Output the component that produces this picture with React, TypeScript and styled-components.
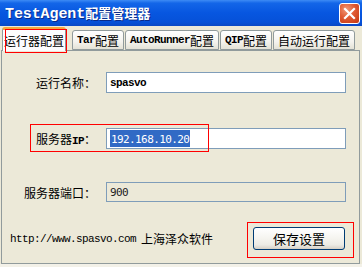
import styled, { createGlobalStyle } from 'styled-components';

const GlobalStyle = createGlobalStyle`
  html, body {
    margin: 0;
    padding: 0;
    background: #ece9d8;
  }
  body {
    font-family: "Noto Sans CJK SC", "Liberation Sans", sans-serif;
    font-size: 12px;
    color: #000;
  }
`;

const Window = styled.div`
  width: 362px;
  height: 267px;
  background: #ece9d8;
  display: flex;
  flex-direction: column;
  overflow: hidden;
`;

const TitleBar = styled.div`
  height: 26px;
  flex-shrink: 0;
  display: flex;
  align-items: center;
  justify-content: space-between;
  padding: 0 2px 0 5px;
  background: linear-gradient(
    to bottom,
    #3d8bf5 0%,
    #1366e8 12%,
    #0756e0 50%,
    #0651d8 85%,
    #0a48c4 100%
  );
`;

const Title = styled.div`
  color: #fff;
  font-weight: 700;
  font-size: 13px;
  text-shadow: 1px 1px 0 #0a2c8a;
  white-space: nowrap;
  display: flex;
  align-items: baseline;
`;

const TitleLatin = styled.span`
  font-family: "Liberation Mono", monospace;
  font-size: 15px;
  letter-spacing: -0.1px;
`;

const CloseButton = styled.div`
  width: 19px;
  height: 19px;
  border: 1px solid #fff;
  border-radius: 3px;
  background: radial-gradient(circle at 35% 30%, #f09a7a 0%, #e05a32 45%, #c3360f 100%);
  display: flex;
  align-items: center;
  justify-content: center;
`;

const TabStrip = styled.div`
  height: 24px;
  flex-shrink: 0;
  display: flex;
  align-items: flex-end;
  padding-left: 2px;
  position: relative;
  z-index: 1;
`;

const Tab = styled.div<{ $active?: boolean; $gap?: number }>`
  position: relative;
  margin-left: ${({ $gap }) => $gap ?? 1}px;
  height: ${({ $active }) => ($active ? 24 : 20)}px;
  padding: 0 ${({ $active }) => ($active ? 1 : 4)}px;
  box-sizing: border-box;
  display: flex;
  align-items: center;
  white-space: nowrap;
  border: 1px solid #919b9c;
  border-bottom: ${({ $active }) => ($active ? 'none' : '1px solid #919b9c')};
  border-radius: 3px 3px 0 0;
  background: ${({ $active }) =>
    $active ? '#fcfcfe' : 'linear-gradient(to bottom, #ffffff 0%, #f4f3ee 60%, #e4e2d6 100%)'};
  border-top: ${({ $active }) => ($active ? '3px solid #f6a93c' : '1px solid #919b9c')};
  font-size: 12px;
  margin-bottom: ${({ $active }) => ($active ? -1 : 0)}px;
`;

const Latin = styled.span`
  font-family: "Liberation Mono", monospace;
  font-size: 11px;
  font-weight: 700;
  letter-spacing: -0.6px;
`;

const Digits = styled.span`
  font-family: "DejaVu Sans Mono", monospace;
  font-size: 11px;
  letter-spacing: -0.6px;
`;

const Mark = styled.div<{ $l: number; $t: number; $w: number; $h: number }>`
  position: absolute;
  left: ${({ $l }) => $l}px;
  top: ${({ $t }) => $t}px;
  width: ${({ $w }) => $w}px;
  height: ${({ $h }) => $h}px;
  border: 1px solid #ff0000;
  box-sizing: border-box;
  pointer-events: none;
`;

const Panel = styled.div`
  margin: 0 2px 0 1px;
  height: 214px;
  box-sizing: border-box;
  border: 1px solid #919b9c;
  background: #ece9d8;
  padding-top: 21px;
  display: flex;
  flex-direction: column;
`;

const Row = styled.div<{ $mt?: number }>`
  position: relative;
  display: flex;
  align-items: center;
  margin-top: ${({ $mt }) => $mt ?? 0}px;
`;

const Label = styled.div`
  width: 94px;
  text-align: right;
  white-space: nowrap;
  font-size: 12px;
`;

const Field = styled.div<{ $disabled?: boolean; $h?: number }>`
  margin-left: 10px;
  width: 240px;
  height: ${({ $h }) => $h ?? 21}px;
  box-sizing: border-box;
  border: 1px solid #7f9db9;
  background: ${({ $disabled }) => ($disabled ? '#ece9d8' : '#fff')};
  color: ${({ $disabled }) => ($disabled ? '#222' : '#000')};
  display: flex;
  align-items: center;
  padding-left: 3px;
`;

const Selected = styled.span`
  background: #316ac5;
  color: #fff;
  line-height: 15px;
  padding: 0 1px;
`;

const Footer = styled.div`
  display: flex;
  align-items: center;
  margin-top: 25px;
  padding-left: 8px;
  padding-right: 14px;
`;

const Link = styled.div`
  white-space: nowrap;
  display: flex;
  align-items: center;
  gap: 5px;
`;

const LinkUrl = styled(Latin)`
  font-weight: 400;
`;

const ButtonWrap = styled.div`
  position: relative;
  margin-left: auto;
`;

const Button = styled.div`
  width: 92px;
  height: 23px;
  box-sizing: border-box;
  border: 1px solid #003c74;
  border-radius: 3px;
  background: linear-gradient(to bottom, #ffffff 0%, #f5f4ef 50%, #ecebe5 80%, #d6d0c5 100%);
  display: flex;
  align-items: center;
  justify-content: center;
  font-size: 13px;
`;

const Bottom = styled.div`
  flex: 1;
  background: #f3f1e8;
`;

export default function App() {
  return (
    <Window>
      <GlobalStyle />
      <TitleBar>
        <Title>
          <TitleLatin>TestAgent</TitleLatin>配置管理器
        </Title>
        <CloseButton>
          <svg width="13" height="13" viewBox="0 0 13 13">
            <path d="M2 2 L11 11 M11 2 L2 11" stroke="#fff" strokeWidth="2.2" strokeLinecap="square" />
          </svg>
        </CloseButton>
      </TitleBar>
      <TabStrip>
        <Tab $active $gap={0}>
          运行器配置
          <Mark $l={2} $t={-1} $w={62} $h={24} />
        </Tab>
        <Tab $gap={6}>
          <Latin>Tar</Latin>配置
        </Tab>
        <Tab>
          <Latin>AutoRunner</Latin>配置
        </Tab>
        <Tab>
          <Latin>QIP</Latin>配置
        </Tab>
        <Tab>自动运行配置</Tab>
      </TabStrip>
      <Panel>
        <Row>
          <Label>运行名称：</Label>
          <Field>
            <Latin>spasvo</Latin>
          </Field>
        </Row>
        <Row $mt={35}>
          <Label>
            服务器<Latin>IP</Latin>：
          </Label>
          <Field>
            <Selected>
              <Digits>192.168.10.20</Digits>
            </Selected>
          </Field>
          <Mark $l={28} $t={-4} $w={179} $h={28} />
        </Row>
        <Row $mt={33}>
          <Label>服务器端口：</Label>
          <Field $disabled $h={20}>
            <Digits>900</Digits>
          </Field>
        </Row>
        <Footer>
          <Link>
            <LinkUrl>http://www.spasvo.com</LinkUrl>
            <span>上海泽众软件</span>
          </Link>
          <ButtonWrap>
            <Button>保存设置</Button>
            <Mark $l={-6} $t={-5} $w={107} $h={36} />
          </ButtonWrap>
        </Footer>
      </Panel>
      <Bottom />
    </Window>
  );
}
